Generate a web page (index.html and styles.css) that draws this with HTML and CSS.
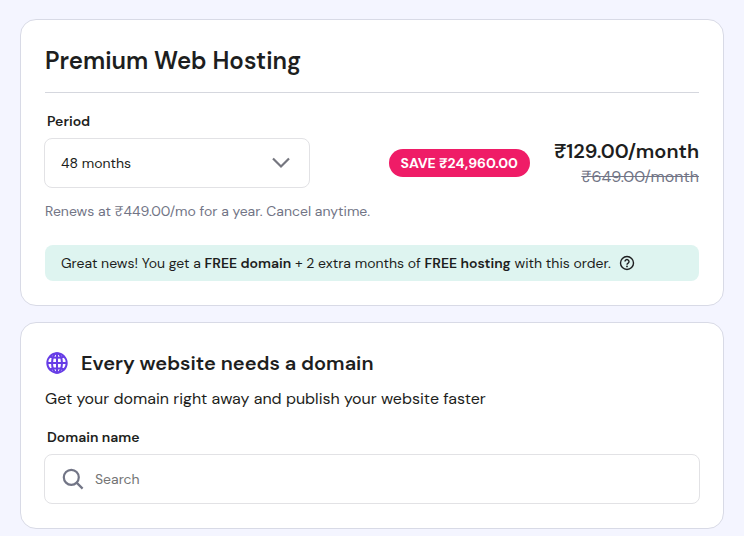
FILE: index.html
```html
<!DOCTYPE html>
<html lang="en">
<head>
    <meta charset="UTF-8">
    <meta name="viewport" content="width=device-width, initial-scale=1.0">
    <title>Premium Web Hosting</title>
    <link rel="stylesheet" href="styles.css">
</head>
<body>
    <main class="cart">
        <section class="card">
            <h1 class="card-title">Premium Web Hosting</h1>

            <div class="plan-row">
                <div class="field period-field">
                    <label for="period">Period</label>
                    <div class="control">
                        <select id="period" name="period">
                            <option value="48" selected>48 months</option>
                            <option value="24">24 months</option>
                            <option value="12">12 months</option>
                            <option value="1">1 month</option>
                        </select>
                        <svg class="chevron" width="24" height="24" viewBox="0 0 24 24" fill="none" stroke="#75767f" stroke-width="2.2" aria-hidden="true">
                            <path d="M4 7.500l8 8 8-8"/>
                        </svg>
                    </div>
                </div>

                <div class="pricing">
                    <span class="badge">SAVE ₹24,960.00</span>
                    <div class="prices">
                        <div class="price">₹129.00/month</div>
                        <del class="old-price">₹649.00/month</del>
                    </div>
                </div>
            </div>

            <p class="renewal">Renews at ₹449.00/mo for a year. Cancel anytime.</p>

            <div class="notice">
                <span>Great news! You get a <strong>FREE domain</strong> + 2 extra months of <strong>FREE hosting</strong> with this order.</span>
                <button type="button" class="help" aria-label="More information">
                    <svg width="16" height="16" viewBox="0 0 16 16" fill="none" stroke="#1d1e20" stroke-width="1.4" aria-hidden="true">
                        <circle cx="8" cy="8" r="6.5"/>
                        <path d="M6 6.600a2 2 0 1 1 3.100 1.600C8.300 8.700 8 9 8 9.700"/>
                        <circle cx="8" cy="11.400" r=".9" fill="#1d1e20" stroke="none"/>
                    </svg>
                </button>
            </div>
        </section>

        <section class="card">
            <div class="domain-heading">
                <svg width="24" height="24" viewBox="0 0 24 24" fill="none" stroke="#673de6" stroke-width="2" aria-hidden="true">
                    <circle cx="12" cy="12" r="9.700"/>
                    <ellipse cx="12" cy="12" rx="5" ry="9.700"/>
                    <path d="M12 2v20M2 12h20M4.500 5.500C8.500 7.300 15.500 7.300 19.500 5.500M4.500 18.500C8.500 16.700 15.500 16.700 19.500 18.500"/>
                </svg>
                <h2>Every website needs a domain</h2>
            </div>
            <p class="domain-text">Get your domain right away and publish your website faster</p>

            <div class="field">
                <label for="domain">Domain name</label>
                <div class="control">
                    <svg class="search-icon" width="24" height="24" viewBox="0 0 24 24" fill="none" stroke="#727586" stroke-width="2.2" aria-hidden="true">
                        <circle cx="10.300" cy="10.300" r="7.500"/>
                        <path d="M15.600 15.600l6 6"/>
                    </svg>
                    <input type="text" id="domain" name="domain" placeholder="Search">
                </div>
            </div>
        </section>
    </main>
</body>
</html>
```

FILE: styles.css
```css
* {
    box-sizing: border-box;
}

body {
    margin: 0;
    background-color: #f4f5ff;
    color: #1d1e20;
    font-family: "DM Sans", Inter, sans-serif;
    font-size: 14px;
    line-height: 24px;
}

h1, h2, p {
    margin: 0;
}

.cart {
    display: flex;
    flex-direction: column;
    gap: 16px;
    padding: 19px 20px 8px;
}

.card {
    padding: 24px;
    background: white;
    border: 1px solid #d8dae6;
    border-radius: 16px;
}

.card-title {
    padding-bottom: 14px;
    margin-bottom: 16px;
    border-bottom: 1px solid #d5d7de;
    font-size: 24px;
    font-weight: 600;
    line-height: 34px;
}

.plan-row {
    display: flex;
    justify-content: space-between;
    align-items: flex-end;
    gap: 16px;
}

.field {
    margin: 0 -1px;
}

.period-field {
    flex: 0 1 266px;
}

.field label {
    display: block;
    margin-bottom: 5px;
    padding-left: 3px;
    font-weight: 600;
}

.control {
    position: relative;
    display: flex;
    align-items: center;
    height: 50px;
    border: 1px solid #e2e2e5;
    border-radius: 8px;
}

.control select,
.control input {
    width: 100%;
    height: 100%;
    padding: 0 16px;
    background: transparent;
    border: none;
    border-radius: 8px;
    color: #1d1e20;
    font: inherit;
}

.control select {
    appearance: none;
}

.control input {
    padding-left: 10px;
}

.control input::placeholder {
    color: #757575;
    opacity: 1;
}

.chevron {
    position: absolute;
    right: 16px;
    pointer-events: none;
}

.search-icon {
    flex-shrink: 0;
    margin-left: 16px;
}

.pricing {
    display: flex;
    align-items: center;
    gap: 24px;
}

.badge {
    padding: 2px 12px;
    background-color: #ef1c67;
    border-radius: 14px;
    color: white;
    font-weight: 700;
    white-space: nowrap;
}

.prices {
    text-align: right;
    white-space: nowrap;
}

.price {
    margin-bottom: 2px;
    font-size: 20px;
    font-weight: 600;
    line-height: 26px;
}

.old-price {
    display: block;
    color: #727586;
    font-size: 16px;
    line-height: 22px;
}

.renewal {
    margin: 11px 0 22px;
    color: #727586;
}

.notice {
    display: flex;
    align-items: center;
    gap: 8px;
    padding: 6px 16px;
    background-color: #def4f0;
    border-radius: 8px;
}

.notice strong {
    font-weight: 600;
}

.help {
    display: flex;
    padding: 0;
    background: none;
    border: none;
    cursor: pointer;
}

.domain-heading {
    display: flex;
    align-items: center;
    gap: 12px;
}

.domain-heading h2 {
    font-size: 20px;
    font-weight: 600;
    line-height: 32px;
}

.domain-text {
    margin: 8px 0 14px;
    font-size: 16px;
}
```
